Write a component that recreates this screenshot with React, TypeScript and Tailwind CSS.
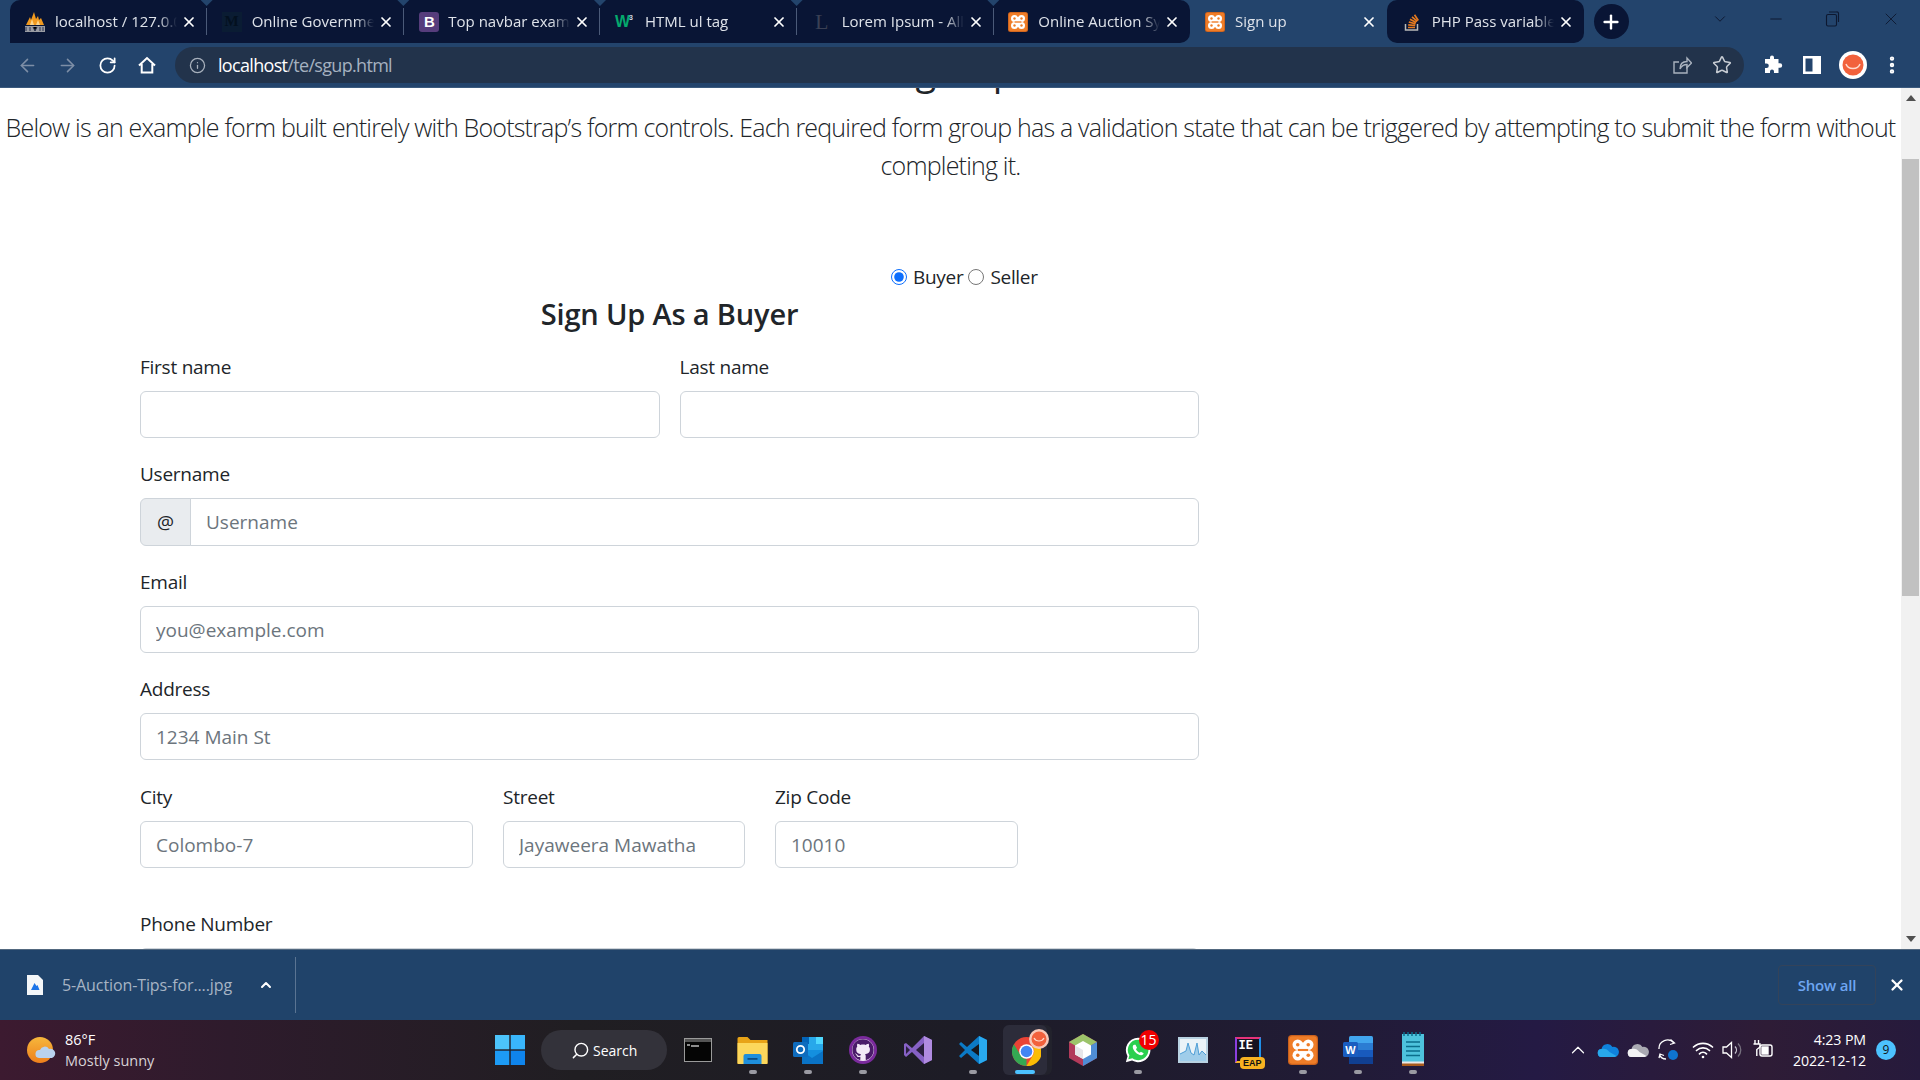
import React from "react";
import { ArrowLeft, ArrowRight, RotateCw, Info, Star, Search, X, Plus, ChevronUp, ChevronDown, Minus, EllipsisVertical } from "lucide-react";
import { FaGithub } from "react-icons/fa";

const Xampp = ({ s = 20 }: { s?: number }) => (
  <svg width={s} height={s} viewBox="0 0 20 20" className="shrink-0">
    <rect width="20" height="20" rx="2.500" fill="#c9601d" />
    <rect x="0.800" y="0.800" width="18.400" height="18.400" rx="2" fill="#ef7d28" />
    <g fill="#fff">
      <circle cx="6.500" cy="6.500" r="3.500" />
      <circle cx="13.500" cy="6.500" r="3.500" />
      <circle cx="6.500" cy="13.500" r="3.500" />
      <circle cx="13.500" cy="13.500" r="3.500" />
      <rect x="6" y="5" width="8" height="10" />
    </g>
    <g fill="#ef7d28">
      <circle cx="6.500" cy="6.500" r="1.200" />
      <circle cx="13.500" cy="6.500" r="1.200" />
      <circle cx="6.500" cy="13.500" r="1.200" />
      <circle cx="13.500" cy="13.500" r="1.200" />
      <rect x="6.500" y="9.300" width="7" height="1.400" />
      <path d="M8.800 2.500h2.400L10 4.500ZM8.800 17.500h2.400L10 15.500ZM2.500 8.800v2.400L4.500 10ZM17.500 8.800v2.400L15.500 10Z" />
    </g>
  </svg>
);

const Pma = () => (
  <svg width="20" height="20" viewBox="0 0 20 20" className="shrink-0">
    <path d="M1 13 5 5l1 3 3-8 2 7 2-3 1 4 2-2 3 7Z" fill="#f29a1f" />
    <path d="M5 13 7 7l2 6ZM11 13l2-5 2 5Z" fill="#fcd48a" />
    <rect x="0" y="14" width="20" height="6" fill="#9a9ca3" />
    <path d="M1 15v4M5 15v4M8 15l2 4 2-4M15 15v4M18 15v4" stroke="#2b3350" strokeWidth="1" />
  </svg>
);

const Fav = ({ k }: { k: string }) => {
  if (k === "pma") return <Pma />;
  if (k === "m")
    return (
      <span className="flex h-5 w-5 shrink-0 items-center justify-center bg-[#0a1c33] font-['Liberation_Serif',serif] text-[15px] font-bold leading-none text-[#03101f]">M</span>
    );
  if (k === "b")
    return (
      <span className="ml-[1px] mr-[-1px] flex h-5 w-5 shrink-0 items-center justify-center rounded-[3px] bg-[#563d7c] font-['Liberation_Sans',sans-serif] text-[15px] font-bold leading-none text-white">B</span>
    );
  if (k === "w")
    return (
      <span className="flex h-5 w-5 shrink-0 items-start font-['Liberation_Sans',sans-serif] text-[16px] font-bold leading-5 tracking-[-1px] text-[#04aa6d]">W<span className="text-[7px] leading-3 text-[#d5d9e2]">3</span></span>
    );
  if (k === "l")
    return (
      <span className="flex h-5 w-5 shrink-0 items-center justify-center font-['Liberation_Serif',serif] text-[22px] leading-none text-[#3a4054]">L</span>
    );
  if (k === "x") return <Xampp />;
  return (
    <svg width="20" height="20" viewBox="0 0 20 20" className="shrink-0">
      <path d="M3.500 12v6h12v-6" fill="none" stroke="#b9b9b9" strokeWidth="1.500" />
      <path d="M6 15.500h7M6.200 12.800l7 .7M6.800 10l6.800 1.900M8 7.300l6.200 3.300M10 4.800l5.300 4.600M12.500 2.800l3.800 5.600" stroke="#e4791f" strokeWidth="1.700" fill="none" />
    </svg>
  );
};

const darkTabs = [
  { k: "pma", t: "localhost / 127.0.0.1" },
  { k: "m", t: "Online Government Auction" },
  { k: "b", t: "Top navbar example" },
  { k: "w", t: "HTML ul tag" },
  { k: "l", t: "Lorem Ipsum - All the" },
  { k: "x", t: "Online Auction System" },
];

const Tab = ({ k, t, sep, notch }: { k: string; t: string; sep?: boolean; notch?: boolean }) => (
  <div className="relative flex h-[43px] w-[196.67px] shrink-0 items-center pl-[15px]">
    <Fav k={k} />
    <span className="ml-[10px] mt-[-2px] w-[122px] shrink-0 overflow-hidden whitespace-nowrap text-[15px] leading-[24px] text-[#dfe3ea] [mask-image:linear-gradient(90deg,#000_85%,transparent)]">{t}</span>
    <X className="ml-[4px] shrink-0 text-white" size={16} strokeWidth={2.600} />
    {sep && <span className="ml-[9px] h-[27px] w-px shrink-0 bg-[#4b5a78]" />}
    {notch && <span className="absolute right-[-6px] top-0 h-[6px] w-[12px] bg-[#23446c] [clip-path:polygon(0_0,100%_0,50%_100%)]" />}
  </div>
);

const TabStrip = () => (
  <div className="flex h-[43px] shrink-0 bg-[#23446c] pl-[10px] font-['Open_Sans',sans-serif]">
    <div className="flex h-[43px] w-[1180px] rounded-t-[10px] rounded-br-[10px] bg-[#091535]">
      {darkTabs.map((d, i) => (
        <Tab key={d.t} k={d.k} t={d.t} sep={i < 5} notch={i < 5} />
      ))}
    </div>
    <Tab k="x" t="Sign up" />
    <div className="h-[43px] w-[197px] rounded-t-[10px] rounded-b-[10px] bg-[#091535]">
      <Tab k="so" t="PHP Pass variable" />
    </div>
    <div className="ml-[10px] mt-[4px] flex h-[35px] w-[35px] items-center justify-center rounded-full bg-[#091535] text-white">
      <Plus size={22} strokeWidth={2.600} />
    </div>
    <div className="ml-auto flex h-[38px] items-center text-[#0d1830]">
      <ChevronDown size={18} strokeWidth={1.300} className="mr-[38px]" />
      <Minus size={18} strokeWidth={1.300} className="mr-[39px]" />
      <svg width="16" height="16" viewBox="0 0 16 16" fill="none" stroke="currentColor" strokeWidth="1.100" className="mr-[41px]">
        <rect x="2.500" y="3.500" width="10" height="11.500" rx="1.500" />
        <path d="M5 1h7.500A1.500 1.500 0 0 1 14.500 2.500V11" />
      </svg>
      <X size={20} strokeWidth={1.100} className="mr-[19px]" />
    </div>
  </div>
);

const Toolbar = () => (
  <div className="flex h-[45px] shrink-0 items-center border-b border-[#3b5a7e] bg-[#23446c] font-['Open_Sans',sans-serif]">
    <ArrowLeft size={21} strokeWidth={1.800} className="ml-[17px] text-[#7d8ea6]" />
    <ArrowRight size={21} strokeWidth={1.800} className="ml-[19px] text-[#7d8ea6]" />
    <RotateCw size={19} strokeWidth={2.200} className="ml-[20px] text-white" />
    <svg width="20" height="20" viewBox="0 0 20 20" fill="none" stroke="#fff" strokeWidth="2" className="ml-[20px]">
      <path d="M2 10.500 10 3l8 7.500M4.700 9v8.500h10.600V9" />
    </svg>
    <div className="ml-[18px] flex h-[36px] w-[1569px] items-center rounded-full bg-[#22334b] pl-[14px]">
      <Info size={17} strokeWidth={1.800} className="text-[#a7b0bc]" />
      <span className="ml-[12px] text-[18px] tracking-[-0.680px] text-white">
        localhost<span className="text-[#a5b1c0]">/te/sgup.html</span>
      </span>
      <svg width="20" height="20" viewBox="0 0 20 20" fill="none" stroke="#a9b2be" strokeWidth="1.400" className="ml-auto mr-[20px]">
        <path d="M15 11v7H2V7h5" />
        <path d="M8 14c0-5 3-7.500 7-7.500V3l4.500 5L15 12.500V9.500c-3 0-5.500 1.500-7 4.500Z" />
      </svg>
      <Star size={20} strokeWidth={1.800} className="mr-[12px] text-[#c8cdd4]" />
    </div>
    <svg width="20" height="20" viewBox="0 0 20 20" fill="#fff" className="ml-[19px]">
      <path d="M7 2.500a2 2 0 0 1 4 0V4h4.500v4.300H17a2.200 2.200 0 0 1 0 4.400h-1.500V18H11v-1.500a2 2 0 0 0-4 0V18H2v-5h1.500a2.300 2.300 0 0 0 0-4.600H2V4h5Z" />
    </svg>
    <svg width="18" height="18" viewBox="0 0 18 18" className="ml-[20px]">
      <path fillRule="evenodd" d="M0 0h18v18H0ZM2.500 2.500v13h7v-13Z" fill="#fff" />
    </svg>
    <svg width="28" height="28" viewBox="0 0 28 28" className="ml-[18px]">
      <circle cx="14" cy="14" r="14" fill="#fff" />
      <circle cx="14" cy="14" r="10.500" fill="#f2613c" />
      <path d="M7 13c2 6 12 6 14 0" fill="none" stroke="#ffd9cc" strokeWidth="1.500" />
    </svg>
    <EllipsisVertical size={22} strokeWidth={2.800} className="ml-[14px] text-white" />
  </div>
);

const Label = ({ children }: { children: React.ReactNode }) => (
  <label className="block h-[30px] text-[19px] leading-[30px] tracking-[-0.250px] text-[#212529]">{children}</label>
);

const Field = ({ label, ph, w, flex }: { label: string; ph?: string; w?: string; flex?: boolean }) => (
  <div className={flex ? "min-w-0 flex-1" : w}>
    <Label>{label}</Label>
    <input
      readOnly
      placeholder={ph}
      className="mt-[9px] block h-[47px] w-full rounded-[6px] border border-[#ced4da] bg-white px-[15px] text-[19px] outline-none placeholder:text-[#6c757d]"
    />
  </div>
);

const Page = () => (
  <div className="flex min-h-0 flex-1 overflow-hidden bg-white font-['Open_Sans',sans-serif]">
    <div className="min-w-0 flex-1">
      <h2 className="mt-[-42px] h-[48px] text-center text-[38px] font-medium leading-[48px] text-[#212529]">Sign up</h2>
      <p className="mt-[14px] text-center text-[25px] font-light leading-[38px] tracking-[-0.800px] text-[#212529]">
        Below is an example form built entirely with Bootstrap’s form controls. Each required form group has a validation state that can be triggered by attempting to submit the form without completing it.
      </p>
      <div className="mt-[79px] flex h-[29px] items-center pl-[891px] text-[19px] tracking-[-0.300px] text-[#212529]">
        <input type="radio" defaultChecked name="role" className="mt-[-2px] h-[16px] w-[16px] accent-[#0d6efd]" />
        <span className="ml-[6px]">Buyer</span>
        <input type="radio" name="role" className="ml-[5px] mt-[-2px] h-[16px] w-[16px]" />
        <span className="ml-[6px]">Seller</span>
      </div>
      <form className="ml-[140px] w-[1059px]">
        <h4 className="h-[44px] text-center text-[29px] font-semibold leading-[44px] tracking-[-0.170px] text-[#212529]">Sign Up As a Buyer</h4>
        <div className="mt-[16px] flex gap-[20px]">
          <Field label="First name" flex />
          <Field label="Last name" flex />
        </div>
        <div className="mt-[21px]">
          <Label>Username</Label>
          <div className="mt-[9px] flex h-[48px]">
            <span className="flex w-[51px] items-center justify-center rounded-l-[6px] border border-[#ced4da] bg-[#e9ecef] text-[19px] text-[#212529]">@</span>
            <input readOnly placeholder="Username" className="ml-[-1px] min-w-0 flex-1 rounded-r-[6px] border border-[#ced4da] px-[15px] text-[19px] outline-none placeholder:text-[#6c757d]" />
          </div>
        </div>
        <div className="mt-[21px]"><Field label="Email" ph="you@example.com" /></div>
        <div className="mt-[21px]"><Field label="Address" ph="1234 Main St" /></div>
        <div className="mt-[22px] flex gap-[30px]">
          <Field label="City" ph="Colombo-7" w="w-[333px]" />
          <Field label="Street" ph="Jayaweera Mawatha" w="w-[242px]" />
          <Field label="Zip Code" ph="10010" w="w-[243px]" />
        </div>
        <div className="mt-[41px]"><Field label="Phone Number" /></div>
      </form>
    </div>
    <div className="flex w-[19px] shrink-0 flex-col items-center bg-[#f1f1f1]">
      <span className="mt-[7px] h-0 w-0 border-x-[5px] border-b-[6px] border-x-transparent border-b-[#505050]" />
      <div className="mt-[58px] h-[437px] w-[17px] bg-[#c1c1c1]" />
      <span className="mt-auto mb-[7px] h-0 w-0 border-x-[5px] border-t-[6px] border-x-transparent border-t-[#505050]" />
    </div>
  </div>
);

const DownloadBar = () => (
  <div className="flex h-[71px] shrink-0 items-center border-t border-[#52687f] bg-[#20436a] font-['Open_Sans',sans-serif]">
    <svg width="16" height="20" viewBox="0 0 16 20" className="ml-[27px]">
      <path d="M0 0h11l5 5v15H0Z" fill="#f4f6f8" />
      <path d="M4 15 7.500 8l2 3 1-1 2 5Z" fill="#1a73e8" />
    </svg>
    <span className="ml-[19px] w-[198px] text-[16px] tracking-[-0.100px] text-[#a7b4c4]">5-Auction-Tips-for....jpg</span>
    <ChevronUp size={16} strokeWidth={3} className="ml-[-2px] text-white" />
    <span className="ml-[21px] h-[56px] w-px bg-[#5a7492]" />
    <div className="ml-auto flex h-[40px] w-[98px] items-center justify-center rounded-[4px] border border-[#33435a] text-[15px] font-semibold tracking-[-0.200px] text-[#6ea6f2]">Show all</div>
    <X size={18} strokeWidth={3} className="ml-[12px] mr-[14px] text-white" />
  </div>
);

const TIcon = ({ children, dot, active }: { children: React.ReactNode; dot?: boolean; active?: boolean }) => (
  <div className="relative flex h-[50px] w-[55px] shrink-0 items-center justify-center">
    {active && <span className="absolute left-[3px] top-0 h-[50px] w-[49px] rounded-[6px] bg-[#22222c]" />}
    {active && <span className="absolute left-[3px] top-0 h-[50px] w-[44px] rounded-[6px] bg-[#2c2c3a]" />}
    {children}
    {dot && <span className="absolute bottom-[1px] h-[4px] w-[8px] rounded-full bg-[#9a9aa2]" />}
    {active && <span className="absolute bottom-[1px] left-[15px] h-[4px] w-[20px] rounded-full bg-[#4cc2ff]" />}
  </div>
);

const Taskbar = () => (
  <div className="flex h-[60px] shrink-0 items-center bg-[linear-gradient(90deg,#3c1a30_0%,#2e1b2c_12%,#201e22_30%,#1d1c26_50%,#211b36_70%,#241a44_80%,#2e1c36_92%,#261a3c_100%)] font-['Open_Sans',sans-serif] text-white">
    <svg width="30" height="30" viewBox="0 0 30 30" className="ml-[27px]">
      <defs>
        <linearGradient id="sun" x1="0" y1="0" x2="0" y2="1"><stop offset="0" stopColor="#f6b73c" /><stop offset="1" stopColor="#ee7f1c" /></linearGradient>
      </defs>
      <circle cx="13" cy="15" r="13" fill="url(#sun)" />
      <path d="M12 23a4 4 0 0 1 1-8 5 5 0 0 1 9-1 4.500 4.500 0 0 1 3 9Z" fill="#b9d2ee" />
    </svg>
    <div className="ml-[8px] w-[100px] text-[14.500px] leading-[21px]">
      <div>86°F</div>
      <div className="whitespace-nowrap text-[#d7d2d6]">Mostly sunny</div>
    </div>
    <svg width="30" height="30" viewBox="0 0 30 30" className="ml-[330px]">
      <rect width="14.300" height="14.300" fill="#4cc4fb" />
      <rect x="15.700" width="14.300" height="14.300" fill="#39b6fb" />
      <rect y="15.700" width="14.300" height="14.300" fill="#1d9bf5" />
      <rect x="15.700" y="15.700" width="14.300" height="14.300" fill="#0f84ec" />
    </svg>
    <div className="ml-[16px] flex h-[40px] w-[126px] items-center rounded-full bg-[#33323a] pl-[30px]">
      <Search size={19} strokeWidth={1.800} className="-scale-x-100" />
      <span className="ml-[3px] text-[14px]">Search</span>
    </div>
    <div className="ml-[3px] flex items-center">
      <TIcon>
        <svg width="28" height="24" viewBox="0 0 28 24"><rect width="28" height="24" fill="#9a9a9a" /><rect x="1" y="1" width="26" height="22" fill="#050505" /><rect x="1" y="1" width="26" height="3" fill="#555" /><path d="M3 7h3M7 8h8" stroke="#bbb" strokeWidth="1.300" /></svg>
      </TIcon>
      <TIcon dot>
        <svg width="31" height="27" viewBox="0 0 30 27"><path d="M0 1.500A1.500 1.500 0 0 1 1.500 0H10l3 3h17v24H0Z" fill="#e8a317" /><path d="M0 6h30v19.500a1.500 1.500 0 0 1-1.500 1.500h-27A1.500 1.500 0 0 1 0 25.500Z" fill="#fcd75c" /><path d="M6 27v-8a2 2 0 0 1 2-2h14a2 2 0 0 1 2 2v8Z" fill="#1f8fdc" /><rect x="10" y="21" width="10" height="1.800" fill="#0c4e86" /></svg>
      </TIcon>
      <TIcon dot>
        <svg width="30" height="28" viewBox="0 0 30 28"><rect x="9" y="1" width="21" height="14" fill="#28a8ea" /><rect x="9" y="1" width="7" height="7" fill="#0364b8" /><rect x="23" y="1" width="7" height="7" fill="#50d9ff" /><path d="M9 14h21v14H9Z" fill="#1490df" /><path d="m9 15 10 7 11-7v13H9Z" fill="#0a73c5" /><rect y="6" width="15" height="15" rx="1.500" fill="#0f6cbd" /><circle cx="7.500" cy="13.500" r="3.700" fill="none" stroke="#fff" strokeWidth="1.800" /></svg>
      </TIcon>
      <TIcon dot>
        <span className="flex h-[28px] w-[28px] items-center justify-center rounded-full bg-[#7a2a9c]">
          <span className="flex h-[22px] w-[22px] items-center justify-center rounded-full bg-[#f3e8f7]">
            <FaGithub size={22} color="#4a1b69" />
          </span>
        </span>
      </TIcon>
      <TIcon>
        <svg width="30" height="30" viewBox="0 0 30 30"><path d="M21 1 29 5v20l-8 4-12-12-6 5-2-2V9l2-1 6 5Z" fill="#8661c5" /><path d="M21 8v14l-8-7Z" fill="#2a1f3e" /><path d="M3 11v8l4-4Z" fill="#2a1f3e" /><path d="M21 1 29 5v20l-8 4Z" fill="#b08be0" /></svg>
      </TIcon>
      <TIcon dot>
        <svg width="30" height="30" viewBox="0 0 30 30"><path d="M21 1 29 5v20l-8 4-12-11-6 5-2-2 6-6-6-6 2-2 6 5Z" fill="#0b7ac6" /><path d="M21 1 29 5v20l-8 4Z" fill="#29a9ef" /><path d="M21 9v12l-8-6Z" fill="#16181f" /></svg>
      </TIcon>
      <TIcon active>
        <svg width="29" height="29" viewBox="0 0 30 30" className="relative left-[-1px] top-[1px]">
          <circle cx="15" cy="15" r="15" fill="#ea4335" />
          <path d="M15 30A15 15 0 0 1 2 7.500L9 19a7 7 0 0 0 6 4Z" fill="#34a853" />
          <path d="M15 30 22 18a7 7 0 0 0-1-8h9A15 15 0 0 1 15 30Z" fill="#fbbc04" />
          <circle cx="15" cy="15" r="7.500" fill="#fff" />
          <circle cx="15" cy="15" r="6" fill="#4285f4" />
        </svg>
        <svg width="20" height="20" viewBox="0 0 20 20" className="absolute left-[29px] top-[4px]">
          <circle cx="10" cy="10" r="10" fill="#f7c8b8" />
          <circle cx="10" cy="10" r="7.500" fill="#f2613c" />
          <path d="M5 9c2 4 8 4 10 0" fill="none" stroke="#ffd9cc" strokeWidth="1.200" />
        </svg>
      </TIcon>
      <TIcon>
        <svg width="28" height="32" viewBox="0 0 28 32"><path d="M14 0 28 8v16l-14 8L0 24V8Z" fill="#b23a5a" /><path d="M14 0 28 8 14 16 0 8Z" fill="#9cc46a" /><path d="M28 8v16l-14 8V16Z" fill="#4f8ed6" /><path d="M14 7l8 4.500v9L14 25l-8-4.500v-9Z" fill="#fff" /><path d="M14 16v9l-8-4.500v-9Z" fill="#e6e6ea" /></svg>
      </TIcon>
      <TIcon dot>
        <span className="relative flex h-[30px] w-[30px] items-center justify-center">
          <svg width="28" height="28" viewBox="0 0 24 24"><path d="M12 1.500A10.500 10.500 0 0 0 3 17.300L1.600 22.500l5.300-1.400A10.500 10.500 0 1 0 12 1.500Z" fill="#fff" /><path d="M12 3.300A8.700 8.700 0 0 0 4.600 16.600l-.9 3.400 3.500-.9A8.700 8.700 0 1 0 12 3.300Z" fill="#2ad04f" /><path d="M8.800 7.500c-.5 0-1.300.7-1.300 2 0 2.700 3.800 7 7.300 7 1.200 0 2-1 2-1.700l-2.300-1.400-1 1c-1.300-.4-2.800-1.900-3.300-3.200l1-1-1.300-2.700Z" fill="#fff" /></svg>
          <span className="absolute right-[-6px] top-[-5px] flex h-[20px] w-[20px] items-center justify-center rounded-full bg-[#f00000] text-[14px] leading-none text-white">15</span>
        </span>
      </TIcon>
      <TIcon>
        <svg width="30" height="26" viewBox="0 0 30 26"><rect width="30" height="26" fill="#b8d2e2" /><rect x="2" y="2" width="26" height="22" fill="#eaf3f8" /><path d="M2 17 8 14l2-8 3 10 3 2 3-12 2 12 3-4 4 4v6H2Z" fill="#9fcdea" /><path d="M2 17 8 14l2-8 3 10 3 2 3-12 2 12 3-4 4 4" fill="none" stroke="#4e9ed6" strokeWidth="1" /></svg>
      </TIcon>
      <TIcon>
        <span className="relative flex h-[26px] w-[26px] flex-col border-2 border-t-[#e6327a] border-r-[#1f8fe8] border-b-[#f7b221] border-l-[#8b3fe0] bg-[#16121f]">
          <span className="pl-[2px] font-['Liberation_Mono',monospace] text-[12px] font-bold leading-[14px] text-white">IE</span>
          <span className="absolute bottom-[-8px] right-[-6px] rounded-[4px] bg-[#f7b221] px-[3px] font-['Liberation_Sans',sans-serif] text-[9px] font-bold leading-[12px] text-[#111]">EAP</span>
        </span>
      </TIcon>
      <TIcon dot><Xampp s={30} /></TIcon>
      <TIcon dot>
        <svg width="30" height="28" viewBox="0 0 30 28"><rect x="6" width="24" height="28" rx="1.500" fill="#41a5ee" /><rect x="6" y="7" width="24" height="7" fill="#2b7cd3" /><rect x="6" y="14" width="24" height="7" fill="#185abd" /><rect x="6" y="21" width="24" height="7" fill="#103f91" /><rect y="6" width="15" height="15" rx="1.500" fill="#1a5dc0" /><text x="7.500" y="18" textAnchor="middle" fontSize="11" fontWeight="700" fill="#fff" fontFamily="Liberation Sans">W</text></svg>
      </TIcon>
      <TIcon dot>
        <svg width="22" height="36" viewBox="0 0 22 36"><rect y="2" width="22" height="31" fill="#4ec3dd" /><rect y="31" width="22" height="3" fill="#a85a1c" /><rect y="29.500" width="22" height="2" fill="#e8e8e8" /><path d="M2 0v4M6 0v4M10 0v4M14 0v4M18 0v4" stroke="#0b6e8c" strokeWidth="1.500" /><path d="M4 10h14M4 14.500h14M4 19h14M4 23.500h14" stroke="#0b6e8c" strokeWidth="1.500" /></svg>
      </TIcon>
    </div>
    <ChevronUp size={22} strokeWidth={1.300} className="ml-[127px] text-white" />
    <svg width="22" height="14" viewBox="0 0 22 14" className="ml-[8px]">
      <path d="M5 14a4 4 0 0 1-.5-8 6 6 0 0 1 11-2A5 5 0 0 1 18 14Z" fill="#0f82dc" />
      <path d="M5 14a4 4 0 0 1-.5-8c3-1 6 0 8 3l7 4-2 1Z" fill="#28a8ea" />
    </svg>
    <svg width="22" height="14" viewBox="0 0 22 14" className="ml-[8px]">
      <path d="M5 14a4 4 0 0 1-.5-8 6 6 0 0 1 11-2A5 5 0 0 1 18 14Z" fill="#a9a9b2" />
      <path d="M5 14a4 4 0 0 1-.5-8c3-1 6 0 8 3l7 4-2 1Z" fill="#f2f2f4" />
    </svg>
    <svg width="22" height="24" viewBox="0 0 22 24" fill="none" stroke="#fff" strokeWidth="1.300" className="ml-[8px]">
      <path d="M2 11a8.500 8.500 0 0 1 15-6M2.500 16.500c1 3 3.500 4.500 6.500 4.500M13.500 1.500l4 3.500-4.500 1.500M2 20l1-4 4 1.500" />
      <circle cx="16" cy="17" r="5" fill="#0f74d0" stroke="none" />
    </svg>
    <svg width="22" height="18" viewBox="0 0 22 18" fill="none" stroke="#fff" strokeWidth="1.700" strokeLinecap="round" className="ml-[13px]">
      <path d="M1.500 6a14 14 0 0 1 19 0M4.500 9.500a9.500 9.500 0 0 1 13 0M7.500 12.800a5 5 0 0 1 7 0" />
      <circle cx="11" cy="16" r="1.300" fill="#fff" stroke="none" />
    </svg>
    <svg width="22" height="20" viewBox="0 0 22 20" fill="none" strokeWidth="1.300" className="ml-[8px]">
      <path d="M1 7h3.500L9.500 2.500v15L4.500 13H1Z" stroke="#fff" />
      <path d="M13 6.500a5 5 0 0 1 0 7" stroke="#c9c6d2" />
      <path d="M16 3.500a9 9 0 0 1 0 13" stroke="#77727f" />
    </svg>
    <svg width="22" height="20" viewBox="0 0 22 20" fill="none" stroke="#fff" strokeWidth="1.400" className="ml-[8px]">
      <rect x="8" y="5" width="12" height="11" rx="2" />
      <rect x="10" y="7" width="6" height="7" fill="#fff" />
      <path d="M3 0v4M6.500 0v4M1.500 4h6.500v3L4.800 9.500V16" />
    </svg>
    <div className="ml-auto text-right text-[14.200px] leading-[21px] tracking-[-0.100px]">
      <div>4:23 PM</div>
      <div>2022-12-12</div>
    </div>
    <span className="ml-[10px] mr-[24px] flex h-[20px] w-[20px] items-center justify-center rounded-full bg-[#4cc2ff] text-[12px] text-[#111]">9</span>
  </div>
);

export default function App() {
  return (
    <div className="flex h-[1080px] w-[1920px] flex-col overflow-hidden">
      <TabStrip />
      <Toolbar />
      <Page />
      <DownloadBar />
      <Taskbar />
    </div>
  );
}
